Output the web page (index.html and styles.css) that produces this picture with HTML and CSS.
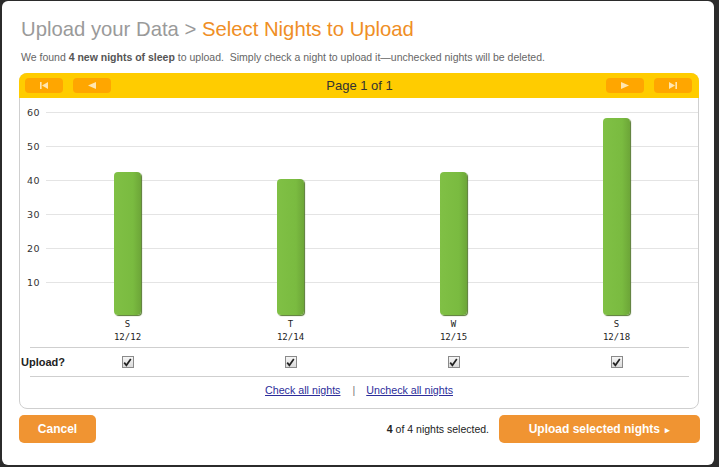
FILE: index.html
```html
<!DOCTYPE html>
<html>
<head>
<meta charset="utf-8">
<link rel="stylesheet" href="styles.css">
</head>
<body>
<div class="modal">
  <h1 class="title"><span class="crumb">Upload your Data &gt; </span><span class="current">Select Nights to Upload</span></h1>
  <p class="intro">We found <b>4 new nights of sleep</b> to upload.&nbsp; Simply check a night to upload it—unchecked nights will be deleted.</p>

  <div class="panel">
    <div class="pager">
      <div class="pager-btns">
        <span class="pbtn"><svg width="10" height="7" viewBox="0 0 10 7"><rect x="1" y="0" width="1.6" height="7" fill="#ffe6b0"/><polygon points="9,0 9,7 3,3.5" fill="#ffe6b0"/></svg></span>
        <span class="pbtn"><svg width="10" height="7" viewBox="0 0 10 7"><polygon points="9,0 9,7 1,3.5" fill="#ffe6b0"/></svg></span>
      </div>
      <div class="page-label">Page 1 of 1</div>
      <div class="pager-btns">
        <span class="pbtn"><svg width="10" height="7" viewBox="0 0 10 7"><polygon points="1,0 1,7 9,3.5" fill="#ffe6b0"/></svg></span>
        <span class="pbtn"><svg width="10" height="7" viewBox="0 0 10 7"><polygon points="1,0 1,7 7,3.5" fill="#ffe6b0"/><rect x="7.4" y="0" width="1.6" height="7" fill="#ffe6b0"/></svg></span>
      </div>
    </div>

    <div class="chart">
      <div class="yaxis">
        <span>60</span><span>50</span><span>40</span><span>30</span><span>20</span><span>10</span>
      </div>
      <div class="plot">
        <div class="col"><div class="bar" style="height:143px"></div></div>
        <div class="col"><div class="bar" style="height:136px"></div></div>
        <div class="col"><div class="bar" style="height:143px"></div></div>
        <div class="col"><div class="bar" style="height:197px"></div></div>
      </div>
      <div class="spacer"></div>
      <div class="day"><span>S</span><span>12/12</span></div>
      <div class="day"><span>T</span><span>12/14</span></div>
      <div class="day"><span>W</span><span>12/15</span></div>
      <div class="day"><span>S</span><span>12/18</span></div>
    </div>

    <div class="rule"></div>
    <div class="upload-row">
      <div class="upload-label">Upload?</div>
      <div class="cell"><span class="check"><svg width="9" height="9" viewBox="0 0 9 9"><path d="M1.2 4.6 L3.4 7.3 L7.8 1" fill="none" stroke="#222" stroke-width="1.7"/></svg></span></div>
      <div class="cell"><span class="check"><svg width="9" height="9" viewBox="0 0 9 9"><path d="M1.2 4.6 L3.4 7.3 L7.8 1" fill="none" stroke="#222" stroke-width="1.7"/></svg></span></div>
      <div class="cell"><span class="check"><svg width="9" height="9" viewBox="0 0 9 9"><path d="M1.2 4.6 L3.4 7.3 L7.8 1" fill="none" stroke="#222" stroke-width="1.7"/></svg></span></div>
      <div class="cell"><span class="check"><svg width="9" height="9" viewBox="0 0 9 9"><path d="M1.2 4.6 L3.4 7.3 L7.8 1" fill="none" stroke="#222" stroke-width="1.7"/></svg></span></div>
    </div>
    <div class="rule"></div>
    <div class="links">
      <a href="#">Check all nights</a><span class="sep">|</span><a href="#">Uncheck all nights</a>
    </div>
  </div>

  <div class="footer">
    <button class="btn cancel">Cancel</button>
    <div class="footer-right">
      <span class="count"><b>4</b> of 4 nights selected.</span>
      <button class="btn upload">Upload selected nights <span class="arrow">▸</span></button>
    </div>
  </div>
</div>
</body>
</html>
```

FILE: styles.css
```css
html, body {
  margin: 0;
  padding: 0;
  background: #2b2b2b;
  width: 719px;
  height: 467px;
  overflow: hidden;
}
body {
  padding: 1px 5px 2px 2px;
  box-sizing: border-box;
  font-family: "Liberation Sans", Arial, sans-serif;
}
.modal {
  background: #fff;
  border-radius: 6px;
  height: 464px;
  box-sizing: border-box;
  padding: 15px 13px 0 17px;
  display: flex;
  flex-direction: column;
}
.title {
  margin: 0 0 0 2px;
  font-size: 20.3px;
  line-height: 26px;
  font-weight: normal;
}
.crumb { color: #9a9a9a; }
.current { color: #ef8e25; }
.intro {
  margin: 8px 0 0 2px;
  font-size: 10.5px;
  line-height: 14px;
  color: #666;
}
.intro b { color: #555; }
.panel {
  margin-top: 9px;
  border: 1px solid #cfcfcf;
  border-radius: 8px;
  width: 680px;
  box-sizing: border-box;
  height: 336px;
}
.pager {
  margin: -1px -1px 0 -1px;
  height: 25px;
  background: #ffcc00;
  border-radius: 8px 8px 0 0;
  display: flex;
  align-items: center;
  justify-content: space-between;
  padding: 0 7px 0 6px;
}
.pager-btns { display: flex; gap: 10px; }
.pbtn {
  width: 38px;
  height: 15px;
  background: #ffa600;
  border-radius: 4px;
  display: flex;
  align-items: center;
  justify-content: center;
}
.pbtn svg { display: block; }
.page-label {
  font-size: 13px;
  color: #333;
  margin-left: 2px;
}
.chart {
  display: grid;
  grid-template-columns: 26px repeat(4, 163px);
  grid-template-rows: 204px auto;
  margin-top: 14px;
}
.yaxis {
  grid-row: 1;
  grid-column: 1;
  display: flex;
  flex-direction: column;
  font-family: "DejaVu Sans", Verdana, sans-serif;
  font-size: 9.5px;
  letter-spacing: 0.5px;
  color: #333;
}
.yaxis span {
  height: 34px;
  line-height: 1px;
  padding-left: 7px;
}
.plot {
  grid-row: 1;
  grid-column: 2 / span 4;
  display: grid;
  grid-template-columns: repeat(4, 163px);
  background-image: repeating-linear-gradient(to bottom, #e4e4e4 0, #e4e4e4 1px, transparent 1px, transparent 34px);
}
.col {
  display: flex;
  justify-content: center;
  align-items: flex-end;
}
.bar {
  width: 27px;
  background: linear-gradient(to right, #80c045 0%, #7abb40 70%, #6da638 100%);
  border-radius: 4px;
  box-shadow: 1px 1px 1px #55782f;
  margin-bottom: 1px;
}
.day {
  display: flex;
  flex-direction: column;
  align-items: center;
  font-family: "DejaVu Sans Mono", monospace;
  font-size: 9px;
  line-height: 13px;
  color: #222;
  padding-top: 2px;
}
.rule {
  height: 1px;
  background: #cfcfcf;
  margin: 3px 9px 0 10px;
}
.upload-row {
  display: grid;
  grid-template-columns: 26px repeat(4, 163px);
  height: 28px;
  align-items: center;
}
.upload-label {
  font-size: 11px;
  font-weight: bold;
  color: #222;
  white-space: nowrap;
  width: 26px;
  padding-left: 1px;
}
.cell {
  display: flex;
  justify-content: center;
}
.check {
  width: 12px;
  height: 12px;
  box-sizing: border-box;
  border: 1px solid #8a8a8a;
  background: linear-gradient(#f6f6f6, #dadada);
  display: flex;
  align-items: center;
  justify-content: center;
}
.check svg { display: block; }
.upload-row + .rule { margin-top: 0; }
.links {
  text-align: center;
  font-size: 10.7px;
  margin-top: 7px;
  color: #777;
}
.links a { color: #2d2d9a; text-decoration: underline; }
.sep { margin: 0 11px 0 12px; }
.footer {
  margin-top: 6px;
  display: flex;
  justify-content: space-between;
  align-items: center;
  width: 681px;
}
.footer-right { display: flex; align-items: center; gap: 10px; }
.btn {
  border: none;
  background: #f09432;
  color: #fff;
  font-family: "Liberation Sans", Arial, sans-serif;
  font-weight: bold;
  font-size: 12px;
  height: 28px;
  border-radius: 5px;
  padding: 0;
}
.cancel { width: 77px; }
.upload { width: 201px; }
.arrow { font-size: 9px; margin-left: 2px; }
.count { font-size: 10.5px; color: #222; }
```
